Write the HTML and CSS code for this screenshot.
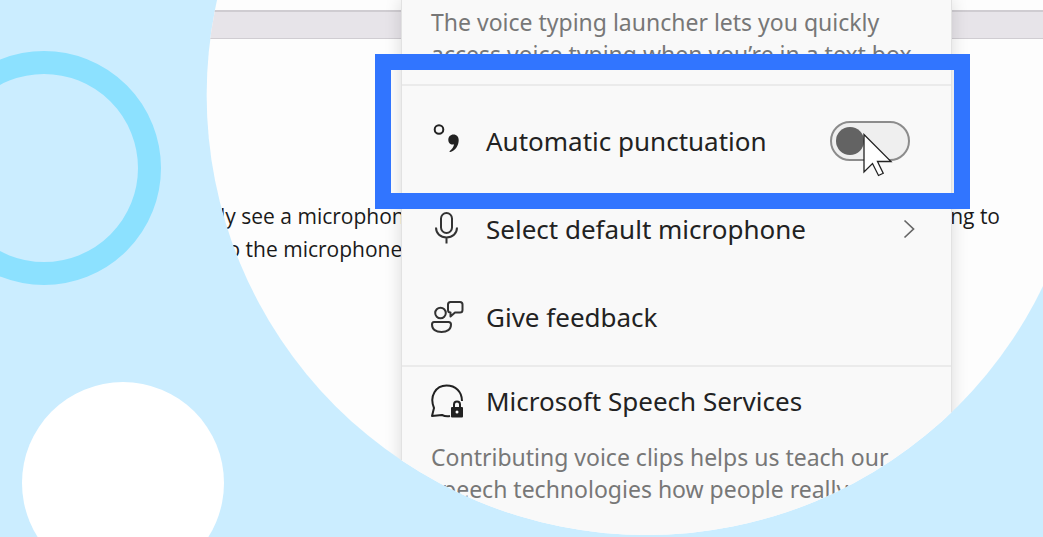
FILE: index.html
```
<!DOCTYPE html>
<html lang="en">
<head>
   <meta charset="utf-8">
   <meta name="viewport" content="width=device-width, initial-scale=1">
   <title>Voice typing - Automatic punctuation</title>
   <link rel="stylesheet" href="styles.css">
</head>
<body>

<div class="scene">
   <div class="ring"></div>
   <div class="dot"></div>

   <main class="lens">

      <!-- Document behind the settings panel -->
      <div class="document">
         <div class="toolbar"></div>
         <div class="sheet">
            <p class="line"><span>ly see a microphone</span><span>ing to</span></p>
            <p class="line"><span>to the microphone</span></p>
         </div>
      </div>

      <!-- Voice typing settings -->
      <section class="panel">
         <p class="hint">The voice typing launcher lets you quickly<br>access voice typing when you’re in a text box.</p>

         <div class="group">
            <div class="row row-focus">
               <svg class="icon" viewBox="0 0 34 34" aria-hidden="true">
                  <circle cx="9" cy="5.500" r="4.300" fill="none" stroke="#222" stroke-width="2"/>
                  <path d="M23.500 10.500c3.200 0 5.200 2.300 5.200 5.600 0 5.700-3.200 10.200-8.200 11.900l-1.300-.5c2.900-2.200 4.600-4.700 4.900-7.200-.4.200-.9.300-1.500.3-2.600 0-4.300-2.200-4.300-4.900 0-2.800 2.100-5.200 5.200-5.200z" fill="#222"/>
               </svg>
               <label class="label" for="punctuation">Automatic punctuation</label>
               <span class="switch">
                  <input type="checkbox" id="punctuation" class="toggle">
                  <svg class="cursor" viewBox="0 0 30 44" aria-hidden="true">
                     <path d="M1 1.500v37.500l8.500-8.500 6 12 4.700-2.200-5.700-11.800h13.500z" fill="#fff" stroke="#222" stroke-width="1.300"/>
                  </svg>
               </span>
               <div class="frame"></div>
            </div>

            <button type="button" class="row">
               <svg class="icon" viewBox="0 0 34 34" aria-hidden="true">
                  <g fill="none" stroke="#333" stroke-width="2">
                     <rect x="11" y="1" width="11" height="20" rx="5.500"/>
                     <path d="M6 15.500c0 6 4.500 10 10.500 10s10.500-4 10.500-10M16.500 25.500v6"/>
                  </g>
               </svg>
               <span class="label">Select default microphone</span>
               <svg class="chevron" viewBox="0 0 12 20" aria-hidden="true">
                  <path d="M1.500 1.500l9 8.500-9 8.500" fill="none" stroke="#666" stroke-width="1.700"/>
               </svg>
            </button>

            <button type="button" class="row">
               <svg class="icon" viewBox="0 0 34 34" aria-hidden="true">
                  <g fill="none" stroke="#333" stroke-width="2" stroke-linejoin="round">
                     <circle cx="10.500" cy="13" r="5.300"/>
                     <path d="M4 22h14.500q2.500 0 2.500 2.500c0 5-4 7.500-9.500 7.500S2 29.500 2 24.500q0-2.500 2-2.500z"/>
                     <path d="M20.500 2h9.500q2.500 0 2.500 2.500v5.500q0 2.500-2.500 2.500h-5l-4.500 4v-4q-2.500 0-2.500-2.500V4.500q0-2.500 2.500-2.500z"/>
                  </g>
               </svg>
               <span class="label">Give feedback</span>
            </button>
         </div>

         <div class="group services">
            <h2 class="heading">
               <svg class="icon" viewBox="0 0 34 34" aria-hidden="true">
                  <path d="M20 32q-4 1-8-1l-10 1 2-8C-1 12 6 1.500 16.500 1.500c9 0 15.500 6 15.500 15.500" fill="none" stroke="#222" stroke-width="2" stroke-linejoin="round"/>
                  <path d="M24 24v-3.500q0-3 3-3t3 3V24" fill="none" stroke="#222" stroke-width="2"/>
                  <rect x="21" y="23" width="12" height="10.500" rx="1" fill="#222"/>
                  <circle cx="27" cy="28" r="1.500" fill="#fff"/>
               </svg>
               <span class="label">Microsoft Speech Services</span>
            </h2>
            <p class="hint">Contributing voice clips helps us teach our<br>speech technologies how people really</p>
         </div>
      </section>

   </main>
</div>

</body>
</html>
```
FILE: styles.css
```
* {
   box-sizing: border-box;
}

body {
   margin: 0;
   font-family: "Noto Sans", "Open Sans", sans-serif;
   color: #222;
}

p, h2 {
   margin: 0;
   font-weight: normal;
}

.scene {
   position: relative;
   height: 100vh;
   overflow: hidden;
   background: #cbedff;
}

/* Background shapes */
.ring {
   position: absolute;
   top: 51px;
   left: -73px;
   width: 234px;
   height: 234px;
   border: 23px solid #8ce1ff;
   border-radius: 50%;
}

.dot {
   position: absolute;
   top: 382px;
   left: 22px;
   width: 202px;
   height: 202px;
   border-radius: 50%;
   background: #fff;
}

/* Round window: the panel sits on top of the document */
.lens {
   display: grid;
   grid-template-columns: 401fr 551fr 91fr;
   min-height: 100%;
   clip-path: circle(440px at 62% 95px);
}

.document {
   grid-area: 1 / 1 / 2 / 4;
   padding-top: 10px;
   background: #fdfdfd;
}

.toolbar {
   height: 29px;
   border-top: 2px solid #cfccd1;
   border-bottom: 1px solid #d0cdd2;
   background: #e7e4e9;
}

.sheet {
   padding: 161px 43px 0 220px;
   font-family: "Open Sans", sans-serif;
   font-size: 21px;
   line-height: 33px;
   color: #1a1a1a;
}

.line {
   display: flex;
   justify-content: space-between;
}

.panel {
   position: relative;
   grid-area: 1 / 2 / 2 / 3;
   padding-top: 6px;
   border: solid #e2e2e2;
   border-width: 0 1px;
   background: #f9f9f9;
   box-shadow: 0 0 16px rgba(0, 0, 0, 0.14);
}

.hint {
   padding-left: 29px;
   font-size: 23px;
   line-height: 32px;
   color: #777;
   white-space: nowrap;
}

.group {
   margin-top: 14px;
   padding-top: 11px;
   border-top: 2px solid #ebebeb;
}

.row {
   position: relative;
   display: flex;
   align-items: center;
   width: 100%;
   height: 88px;
   padding: 0 36px 0 28px;
   border: 0;
   background: none;
   color: inherit;
   font: inherit;
   text-align: left;
}

.icon {
   flex: none;
   width: 34px;
   height: 34px;
   margin-right: 22px;
}

.label {
   flex: 1;
   font-size: 26px;
   line-height: 36px;
   white-space: nowrap;
}

.chevron {
   width: 12px;
   height: 20px;
}

.switch {
   position: relative;
   display: flex;
   margin-right: 5px;
}

.toggle {
   appearance: none;
   width: 80px;
   height: 40px;
   margin: 0;
   padding: 4px;
   border: 2px solid #8c8c8c;
   border-radius: 20px;
   background: #efefef;
}

.toggle::before {
   content: "";
   display: block;
   width: 28px;
   height: 28px;
   border-radius: 50%;
   background: #636363;
}

.toggle:checked::before {
   margin-left: auto;
}

.cursor {
   position: absolute;
   top: 12px;
   left: 33px;
   width: 30px;
   height: 44px;
}

/* Blue highlight round the first row */
.frame {
   position: absolute;
   top: -43px;
   right: -19px;
   bottom: -24px;
   left: -27px;
   border: 16px solid #3175ff;
   pointer-events: none;
}

.services {
   margin-top: 4px;
   padding-top: 16px;
}

.heading {
   display: flex;
   align-items: center;
   margin-bottom: 22px;
   padding-left: 28px;
}
```
